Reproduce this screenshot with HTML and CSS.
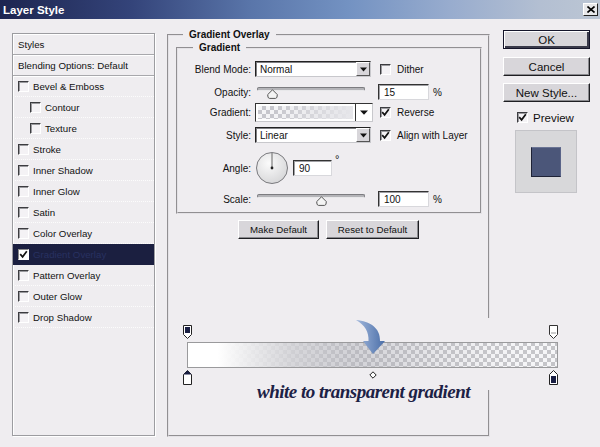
FILE: index.html
```html
<!DOCTYPE html>
<html>
<head>
<meta charset="utf-8">
<link rel="stylesheet" href="styles.css">
</head>
<body>
<div class="dialog">
  <div class="titlebar">
    <span class="title">Layer Style</span>
    <span class="close"><svg width="8" height="7" viewBox="0 0 8 7"><path d="M0.5 0.5 L7.5 6.5 M7.5 0.5 L0.5 6.5" stroke="#000" stroke-width="1.6"/></svg></span>
  </div>
  <div class="main">
    <div class="stylelist">
      <div class="item head">Styles</div>
      <div class="item head">Blending Options: Default</div>
      <div class="item"><span class="cb"></span>Bevel &amp; Emboss</div>
      <div class="item sub"><span class="cb"></span>Contour</div>
      <div class="item sub"><span class="cb"></span>Texture</div>
      <div class="item"><span class="cb"></span>Stroke</div>
      <div class="item"><span class="cb"></span>Inner Shadow</div>
      <div class="item"><span class="cb"></span>Inner Glow</div>
      <div class="item"><span class="cb"></span>Satin</div>
      <div class="item"><span class="cb"></span>Color Overlay</div>
      <div class="item sel"><span class="cb on"><svg width="9" height="9" viewBox="0 0 9 9"><path d="M1.2 4.2 L3.6 6.8 L7.8 1.2" stroke="#111" stroke-width="1.7" fill="none"/></svg></span><span class="seltext">Gradient Overlay</span></div>
      <div class="item"><span class="cb"></span>Pattern Overlay</div>
      <div class="item"><span class="cb"></span>Outer Glow</div>
      <div class="item"><span class="cb"></span>Drop Shadow</div>
    </div>

    <fieldset class="group outer">
      <legend>Gradient Overlay</legend>
      <fieldset class="group inner">
        <legend>Gradient</legend>
        <div class="row r1">
          <span class="lbl">Blend Mode:</span>
          <div class="select"><span class="val">Normal</span><span class="arrow"><svg width="7" height="5" viewBox="0 0 7 5"><path d="M0 0.5 H7 L3.5 4.5 Z" fill="#111"/></svg></span></div>
          <span class="chk"><span class="cb"></span>Dither</span>
        </div>
        <div class="row r2">
          <span class="lbl">Opacity:</span>
          <div class="slider"><span class="track"></span><svg class="thumb t-op" width="11" height="10" viewBox="0 0 11 10"><path d="M5.5 0.8 L10.3 5.6 Q10.5 9.4 8.5 9.4 H2.5 Q0.5 9.4 0.7 5.6 Z" fill="#f4f4f4" stroke="#555"/></svg></div>
          <span class="num">15</span><span class="pct">%</span>
        </div>
        <div class="row r3">
          <span class="lbl">Gradient:</span>
          <div class="gpick"><span class="gswatch"></span><span class="garrow"><svg width="8" height="5" viewBox="0 0 8 5"><path d="M0 0.5 H8 L4 4.8 Z" fill="#111"/></svg></span></div>
          <span class="chk"><span class="cb"><svg width="9" height="9" viewBox="0 0 9 9"><path d="M1.2 4.2 L3.6 6.8 L7.8 1.2" stroke="#111" stroke-width="1.7" fill="none"/></svg></span>Reverse</span>
        </div>
        <div class="row r4">
          <span class="lbl">Style:</span>
          <div class="select"><span class="val">Linear</span><span class="arrow"><svg width="7" height="5" viewBox="0 0 7 5"><path d="M0 0.5 H7 L3.5 4.5 Z" fill="#111"/></svg></span></div>
          <span class="chk"><span class="cb"><svg width="9" height="9" viewBox="0 0 9 9"><path d="M1.2 4.2 L3.6 6.8 L7.8 1.2" stroke="#111" stroke-width="1.7" fill="none"/></svg></span>Align with Layer</span>
        </div>
        <div class="row r5">
          <span class="lbl">Angle:</span>
          <svg class="dial" width="34" height="34" viewBox="0 0 34 34">
            <defs><radialGradient id="dg" cx="0.4" cy="0.35" r="0.7"><stop offset="0" stop-color="#fbfbfb"/><stop offset="1" stop-color="#d6d6d8"/></radialGradient></defs>
            <circle cx="17" cy="17" r="15.5" fill="url(#dg)" stroke="#7a7a7e"/>
            <path d="M17 17 V2" stroke="#666" stroke-width="1"/>
            <circle cx="17" cy="17" r="1.4" fill="#222"/>
          </svg>
          <span class="num angle">90</span><span class="deg">°</span>
        </div>
        <div class="row r6">
          <span class="lbl">Scale:</span>
          <div class="slider"><span class="track"></span><svg class="thumb t-sc" width="11" height="10" viewBox="0 0 11 10"><path d="M5.5 0.8 L10.3 5.6 Q10.5 9.4 8.5 9.4 H2.5 Q0.5 9.4 0.7 5.6 Z" fill="#f4f4f4" stroke="#555"/></svg></div>
          <span class="num">100</span><span class="pct">%</span>
        </div>
      </fieldset>
      <div class="btnrow">
        <button class="btn w1">Make Default</button>
        <button class="btn w2">Reset to Default</button>
      </div>
    </fieldset>

    <div class="side">
      <button class="bigbtn default">OK</button>
      <button class="bigbtn b2">Cancel</button>
      <button class="bigbtn b3">New Style...</button>
      <span class="chk preview"><span class="cb"><svg width="9" height="9" viewBox="0 0 9 9"><path d="M1.2 4.2 L3.6 6.8 L7.8 1.2" stroke="#111" stroke-width="1.7" fill="none"/></svg></span>Preview</span>
      <div class="previewbox"><div class="swatch"></div></div>
    </div>
  </div>

  <div class="annot">
    <svg width="390" height="72" viewBox="0 0 390 72">
      <defs>
        <pattern id="ck" width="8" height="8" patternUnits="userSpaceOnUse" x="9" y="24">
          <rect width="8" height="8" fill="#f6f6f8"/>
          <rect width="4" height="4" fill="#c4c4c8"/>
          <rect x="4" y="4" width="4" height="4" fill="#c4c4c8"/>
        </pattern>
        <linearGradient id="wt" x1="0" y1="0" x2="1" y2="0">
          <stop offset="0" stop-color="#ffffff" stop-opacity="1"/>
          <stop offset="0.08" stop-color="#ffffff" stop-opacity="1"/>
          <stop offset="0.28" stop-color="#d2d2d6" stop-opacity="0.85"/>
          <stop offset="0.5" stop-color="#aeaeb6" stop-opacity="0.45"/>
          <stop offset="0.75" stop-color="#bcbcc2" stop-opacity="0.15"/>
          <stop offset="1" stop-color="#ffffff" stop-opacity="0"/>
        </linearGradient>
        <linearGradient id="ar" x1="0" y1="0" x2="1" y2="0">
          <stop offset="0" stop-color="#a2b8dc"/>
          <stop offset="1" stop-color="#4a6ea8"/>
        </linearGradient>
      </defs>
      <rect x="9.5" y="24.5" width="370" height="25" fill="url(#ck)" stroke="#9a9a9c"/>
      <rect x="10" y="25" width="369" height="24" fill="url(#wt)"/>
      <!-- top opacity stops -->
      <path d="M5.5 7.5 H13.5 V16.5 L9.5 20.5 L5.5 16.5 Z" fill="#fff" stroke="#222"/>
      <rect x="7" y="9" width="5" height="6" fill="#1a1f44"/>
      <path d="M371.5 7.5 H379.5 V16.5 L375.5 20.5 L371.5 16.5 Z" fill="#fff" stroke="#333"/>
      <path d="M373 15 H378" stroke="#999"/>
      <!-- bottom colour stops -->
      <path d="M9.5 52.5 L13.5 56.5 V66.5 H5.5 V56.5 Z" fill="#fff" stroke="#222"/>
      <path d="M9.5 52.5 L13.5 56.5 H5.5 Z" fill="#1a1f44"/>
      <path d="M375.5 52.5 L379.5 56.5 V66.5 H371.5 V56.5 Z" fill="#fff" stroke="#222"/>
      <rect x="373" y="58" width="5" height="7" fill="#1a1f44"/>
      <!-- midpoint -->
      <path d="M195 53.8 L198.2 57 L195 60.2 L191.8 57 Z" fill="#fff" stroke="#222"/>
      <!-- arrow -->
      <path d="M178 2 C192 3 202.5 10 202 23 L207 23 L195 36 L185 23 L190.5 23 C191 14 187 7 178 2 Z" fill="url(#ar)"/>
    </svg>
  </div>
  <div class="caption">white to transparent gradient</div>
</div>
</body>
</html>
```
FILE: styles.css
```css
html, body { margin: 0; padding: 0; }
body { background: #efedf0; }

.dialog {
  width: 600px;
  height: 447px;
  background: #efedf0;
  position: relative;
  overflow: hidden;
  font-family: "Liberation Sans", Arial, sans-serif;
  font-size: 10px;
  color: #111;
}

.titlebar {
  height: 19px;
  box-sizing: border-box;
  padding: 0 2px 0 3px;
  display: flex;
  align-items: center;
  justify-content: space-between;
  background: linear-gradient(to right, #1d2550 0%, #34447a 22%, #5a76aa 42%, #7392c2 58%, #98acce 75%, #b3bfd2 90%, #bcc6d4 100%);
}
.title { color: #fff; font: bold 11.5px "Liberation Sans", Arial, sans-serif; }
.close {
  width: 15px; height: 13px; box-sizing: border-box;
  background: #e8e8ea;
  border: 1px solid; border-color: #fff #222 #222 #fff;
  display: flex; align-items: center; justify-content: center;
}

.main {
  display: flex;
  align-items: flex-start;
  padding: 10px 0 0 12px;
}

/* ---- style list ---- */
.stylelist {
  margin-top: 4px;
  width: 143px;
  height: 403px;
  box-sizing: border-box;
  border: 1px solid #9c9ca0;
  box-shadow: inset 1px 1px 0 #fff, 1px 1px 0 #fff;
  font-size: 9.7px;
}
.item {
  height: 21px;
  box-sizing: border-box;
  display: flex;
  align-items: center;
  padding-left: 5px;
  border-bottom: 1px dotted #fcfcfc;
}
.item.sub { padding-left: 17px; }
.item.head { border-bottom: 1px solid #a8a8ac; box-shadow: 0 1px 0 #fff; }
.item .cb { margin-right: 4px; }
.item.sel { background: #1b1f40; border-bottom-color: #1b1f40; }
.seltext { color: #283160; }

.cb {
  width: 11px; height: 11px; box-sizing: border-box; flex: none;
  border: 1px solid; border-color: #3c3c40 #fff #fff #3c3c40;
  box-shadow: inset 1px 1px 0 #9a9a9e;
  background: #f4f2f5;
  display: flex; align-items: center; justify-content: center;
}
.cb.on { background: #fff; border-color: #888 #fff #fff #888; box-shadow: none; }

/* ---- group boxes ---- */
.group {
  margin: 0;
  padding: 0;
  border: 2px groove #e4e2e6;
  box-sizing: border-box;
  min-width: 0;
}
.group legend {
  font: bold 10px "Liberation Sans", Arial, sans-serif;
  line-height: 12px;
  padding: 0 6px;
  color: #111;
}
.outer { margin-left: 12px; width: 323px; height: 408px; }
.outer > legend { margin-left: 14px; }
.inner { margin: 1px 0 0 7px; width: 306px; padding: 7px 0 5px 0; }
.inner > legend { margin-left: 15px; }

.row { display: flex; align-items: center; height: 16px; }
.r2 { margin-top: 7px; }
.r3 { margin-top: 3px; height: 19px; }
.r4 { margin-top: 5px; }
.r5 { margin-top: 8px; height: 34px; }
.r6 { margin-top: 6px; }
.lbl { width: 73px; flex: none; text-align: right; margin-right: 4px; }

.select {
  width: 116px; height: 16px; box-sizing: border-box; flex: none;
  background: #fff;
  border: 1px solid; border-color: #222 #c8c8cc #c8c8cc #222;
  box-shadow: inset 1px 1px 0 #808084;
  display: flex; align-items: center;
}
.select .val { flex: 1; padding-left: 4px; }
.select .arrow {
  width: 14px; height: 14px; box-sizing: border-box;
  background: #d8d6da;
  border: 1px solid; border-color: #fff #555 #555 #fff;
  display: flex; align-items: center; justify-content: center;
}

.chk { display: flex; align-items: center; margin-left: 9px; }
.chk .cb { margin-right: 6px; }

.slider { width: 116px; height: 16px; flex: none; position: relative; }
.track {
  display: block;
  margin: 3px 6px 0 2px;
  height: 4px;
  box-sizing: border-box;
  border-radius: 3px;
  background: #b4b4b8;
  border: 1px solid #7c7c80;
  border-bottom-color: #e8e8ea;
}
.thumb { position: absolute; top: 5px; }
.t-op { left: 12px; }
.t-sc { left: 61px; }

.num {
  height: 16px; box-sizing: border-box; flex: none;
  width: 51px; margin-left: 7px;
  background: #fff;
  border: 1px solid; border-color: #333 #d8d8dc #d8d8dc #333;
  box-shadow: inset 1px 1px 0 #a0a0a4;
  padding-left: 5px;
  display: flex; align-items: center;
}
.num.angle { width: 39px; margin-left: 4px; }
.pct { margin-left: 4px; }
.deg { margin-left: 3px; align-self: flex-start; margin-top: 2px; font-size: 11px; }
.dial { flex: none; }

.gpick {
  width: 118px; height: 19px; box-sizing: border-box; flex: none;
  background: #fff;
  border: 1px solid; border-color: #333 #c8c8cc #c8c8cc #333;
  display: flex;
}
.gswatch {
  flex: 1;
  margin: 2px;
  background:
    linear-gradient(to right, rgba(226,226,230,0) 15%, rgba(226,226,230,0.6) 60%, rgba(230,230,234,1) 100%),
    conic-gradient(#c6c6cc 25%, #f4f4f6 0 50%, #c6c6cc 0 75%, #f4f4f6 0);
  background-size: auto, 8px 8px;
}
.garrow {
  width: 16px;
  border-left: 1px solid #333;
  display: flex; align-items: center; justify-content: center;
}
.r3 .chk { margin-left: 7px; }

.btnrow { display: flex; justify-content: center; gap: 7px; margin-top: 6px; }
.btn {
  height: 19px; padding: 0; margin: 0;
  font: 9.7px "Liberation Sans", Arial, sans-serif;
  color: #111;
  background: #d8d6da;
  border: 1px solid; border-color: #fff #1e1e22 #1e1e22 #fff;
  box-shadow: inset -1px -1px 0 #8a8a8e;
}
.w1 { width: 81px; }
.w2 { width: 93px; }

/* ---- side ---- */
.side { margin-left: 13px; margin-top: 1px; width: 87px; display: flex; flex-direction: column; }
.bigbtn {
  height: 19px; width: 87px; padding: 0; margin: 0;
  font: 11.5px "Liberation Sans", Arial, sans-serif;
  color: #111;
  background: #d8d6da;
  border: 1px solid; border-color: #fff #1e1e22 #1e1e22 #fff;
  box-shadow: inset -1px -1px 0 #8a8a8e;
}
.bigbtn.default {
  border: 1px solid #15152a;
  box-shadow: inset 1px 1px 0 #fff, inset -2px -2px 0 #3a3a4a;
}
.b2 { margin-top: 8px; }
.b3 { margin-top: 7px; }
.preview { margin: 10px 0 0 14px; font-size: 11.5px; height: 11px; }
.preview .cb { margin-right: 5px; }
.previewbox {
  margin: 7px 0 0 12px;
  width: 62px; height: 63px; box-sizing: border-box;
  background: #d8d8da;
  border: 1px solid #c4c4c8;
  display: flex; align-items: center; justify-content: center;
}
.swatch {
  width: 30px; height: 30px; box-sizing: border-box;
  background: #4b5679;
  border: 1px solid; border-color: #6a7494 #5a6488 #1e2236 #1e2236;
}

/* ---- annotation overlay ---- */
.annot {
  position: absolute;
  left: 178px; top: 318px;
  width: 390px; height: 72px;
  background: #efedf0;
}
.annot svg { display: block; }
.caption {
  position: absolute;
  left: 257px; top: 381px;
  font: italic bold 19px "Liberation Serif", "Times New Roman", serif;
  letter-spacing: -0.5px;
  line-height: 22px;
  color: #1c2145;
  white-space: nowrap;
}
```
